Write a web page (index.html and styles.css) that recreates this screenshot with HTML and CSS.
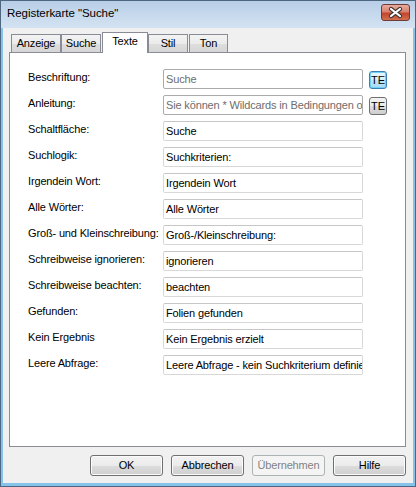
FILE: index.html
```html
<!DOCTYPE html>
<html lang="de">
<head>
<meta charset="utf-8">
<title>Registerkarte "Suche"</title>
<link rel="stylesheet" href="styles.css">
</head>
<body>
<div class="window">
  <div class="titlebar">
    <span class="title">Registerkarte "Suche"</span>
    <div class="close">
      <svg width="27" height="15" viewBox="0 0 27 15">
        <path d="M9 4 L18 11 M18 4 L9 11" stroke="#3b3535" stroke-width="4.2" stroke-linecap="round" fill="none"/>
        <path d="M9 4 L18 11 M18 4 L9 11" stroke="#ffffff" stroke-width="2.2" stroke-linecap="round" fill="none"/>
      </svg>
    </div>
  </div>
  <div class="client">
    <div class="tabs">
      <div class="tab w-anzeige">Anzeige</div>
      <div class="tab w-suche">Suche</div>
      <div class="tab active">Texte</div>
      <div class="tab w-stil">Stil</div>
      <div class="tab w-ton">Ton</div>
    </div>
    <div class="panel">
      <div class="row"><div class="label">Beschriftung:</div><div class="field ro">Suche</div><div class="te focus">TE</div></div>
      <div class="row"><div class="label">Anleitung:</div><div class="field ro">Sie können * Wildcards in Bedingungen oder Abfragen verwenden</div><div class="te">TE</div></div>
      <div class="row"><div class="label">Schaltfläche:</div><div class="field">Suche</div></div>
      <div class="row"><div class="label">Suchlogik:</div><div class="field">Suchkriterien:</div></div>
      <div class="row"><div class="label">Irgendein Wort:</div><div class="field">Irgendein Wort</div></div>
      <div class="row"><div class="label">Alle Wörter:</div><div class="field">Alle Wörter</div></div>
      <div class="row"><div class="label">Groß- und Kleinschreibung:</div><div class="field">Groß-/Kleinschreibung:</div></div>
      <div class="row"><div class="label">Schreibweise ignorieren:</div><div class="field">ignorieren</div></div>
      <div class="row"><div class="label">Schreibweise beachten:</div><div class="field">beachten</div></div>
      <div class="row"><div class="label">Gefunden:</div><div class="field">Folien gefunden</div></div>
      <div class="row"><div class="label">Kein Ergebnis</div><div class="field">Kein Ergebnis erzielt</div></div>
      <div class="row"><div class="label">Leere Abfrage:</div><div class="field">Leere Abfrage - kein Suchkriterium definiert</div></div>
    </div>
    <div class="buttons">
      <div class="btn">OK</div>
      <div class="btn">Abbrechen</div>
      <div class="btn disabled">Übernehmen</div>
      <div class="btn">Hilfe</div>
    </div>
  </div>
</div>
</body>
</html>
```

FILE: styles.css
```css
* { box-sizing: border-box; }
html, body { margin: 0; padding: 0; }
body {
  width: 416px;
  height: 487px;
  overflow: hidden;
  font-family: "Liberation Sans", Arial, sans-serif;
  font-size: 11px;
  letter-spacing: -0.15px;
  color: #000;
  background: #86c3ea;
}
.window {
  width: 416px;
  height: 487px;
  border: 1px solid #4e6780;
  background: #86c3ea;
  display: flex;
  flex-direction: column;
}
.titlebar {
  height: 27px;
  flex: none;
  background: linear-gradient(#b8cee7, #d4e3f2);
  display: flex;
  justify-content: space-between;
  align-items: flex-start;
  padding: 0 5px 0 6px;
}
.title {
  font-size: 11.5px;
  letter-spacing: -0.05px;
  line-height: 15px;
  padding-top: 5px;
  color: #000;
}
.close {
  width: 29px;
  height: 17px;
  margin-top: 3px;
  border: 1px solid #6e3b3b;
  border-radius: 3px;
  background: linear-gradient(#e9ab9c 0%, #d88270 45%, #c4462d 55%, #d0704f 100%);
  display: flex;
}
.client {
  flex: 1;
  margin: 0 2px 3px 2px;
  background: #f0f0f0;
  display: flex;
  flex-direction: column;
}
.tabs {
  height: 24px;
  flex: none;
  display: flex;
  align-items: flex-end;
  padding-left: 8px;
}
.tab {
  height: 18px;
  border: 1px solid #898c95;
  border-bottom: none;
  background: linear-gradient(#f3f3f3 0%, #ebebeb 50%, #dedede 51%, #d6d6d6 100%);
  text-align: center;
  line-height: 13px;
  padding-top: 2px;
}
.w-anzeige { width: 50px; }
.w-suche { width: 40px; }
.w-stil { width: 40px; }
.w-ton { width: 39px; margin-left: 1px; }
.tab.active {
  width: 46px;
  height: 21px;
  margin-left: 1px;
  margin-bottom: -1px;
  background: #ffffff;
  position: relative;
  z-index: 1;
}
.panel {
  margin-left: 6px;
  width: 397px;
  height: 395px;
  flex: none;
  border: 1px solid #898c95;
  background: #ffffff;
  padding: 16px 0 0 18px;
  display: flex;
  flex-direction: column;
  gap: 6px;
}
.row {
  display: flex;
  align-items: flex-start;
  height: 20px;
}
.label {
  width: 135px;
  flex: none;
  padding-top: 2px;
  line-height: 13px;
  white-space: nowrap;
}
.field {
  width: 200px;
  height: 20px;
  flex: none;
  border: 1px solid #d8d8d8;
  border-top-color: #c6c6c6;
  border-radius: 2px;
  background: #fff;
  padding: 0 2px;
  line-height: 18px;
  white-space: nowrap;
  overflow: hidden;
}
.field.ro {
  border-color: #ababab;
  color: #6d6d6d;
}
.te {
  width: 18px;
  height: 18px;
  margin-top: 2px;
  margin-left: 6px;
  border: 1px solid #707070;
  border-radius: 3px;
  background: linear-gradient(#f2f2f2 0%, #ebebeb 50%, #dddddd 51%, #cfcfcf 100%);
  text-align: center;
  line-height: 16px;
  letter-spacing: 0;
  font-size: 11px;
}
.te.focus {
  border-color: #3c7fb1;
  background: linear-gradient(#eaf6fd 0%, #d9f0fc 50%, #bee6fd 51%, #a7d9f5 100%);
  box-shadow: inset 0 0 0 1px #6fd0f6;
}
.buttons {
  margin-top: 8px;
  display: flex;
  justify-content: flex-end;
  gap: 8px;
  padding-right: 7px;
}
.btn {
  width: 73px;
  height: 21px;
  border: 1px solid #707070;
  border-radius: 3px;
  background: linear-gradient(#f2f2f2 0%, #ebebeb 50%, #dddddd 51%, #cfcfcf 100%);
  box-shadow: inset 0 0 0 1px #fbfbfb;
  text-align: center;
  line-height: 19px;
}
.btn.disabled {
  border-color: #adb2b5;
  background: #f4f4f4;
  box-shadow: none;
  color: #838383;
}
```
